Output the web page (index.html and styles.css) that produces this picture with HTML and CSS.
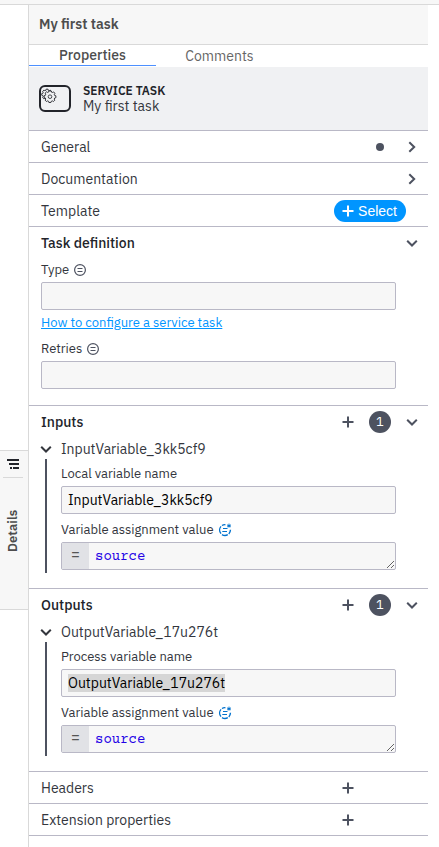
FILE: index.html
```html
<!DOCTYPE html>
<html lang="en">
<head>
<meta charset="utf-8">
<meta name="viewport" content="width=device-width, initial-scale=1">
<title>My first task</title>
<link rel="stylesheet" href="styles.css">
</head>
<body>
<svg class="symbols" aria-hidden="true">
  <symbol id="right" viewBox="0 0 16 16"><path d="M5.3 3.2 10.2 8l-4.9 4.8" fill="none" stroke="currentColor" stroke-width="2"/></symbol>
  <symbol id="down" viewBox="0 0 16 16"><path d="M3.2 5.8 8 10.5l4.8-4.7" fill="none" stroke="currentColor" stroke-width="2"/></symbol>
  <symbol id="plus" viewBox="0 0 16 16"><path d="M8 2.5v11M2.5 8h11" fill="none" stroke="currentColor" stroke-width="2"/></symbol>
  <symbol id="feel" viewBox="0 0 14 14"><g fill="none" stroke="currentColor"><circle cx="7" cy="7" r="5.4" stroke-width="1.2"/><path d="M4.5 5.5h5M4.5 8.5h5"/></g></symbol>
  <symbol id="feel-required" viewBox="0 0 14 14"><g fill="none" stroke="currentColor"><path d="M7.4 1.7A5.4 5.4 0 0 0 4 2.5M3 3.4A5.4 5.4 0 0 0 3 10.6M4 11.6A5.4 5.4 0 0 0 9.8 11.7M10.8 10.9A5.4 5.4 0 0 0 12.4 6.8" stroke-width="1.4"/><path d="M5 5.5h4.5M4.3 8.5h4.7" stroke-width="1.2"/><path d="M11 .6v4M9.1 1.9l3.8 1.4M12.9 1.9l-3.8 1.4M11 2.6l1.2 1.6M11 2.6 9.8 4.2" stroke-width=".9"/></g></symbol>
</svg>
<div class="topbar"></div>
<div class="workspace">
  <aside class="rail">
    <button class="details-tab" type="button">
      <svg class="details-icon" viewBox="0 0 12 10" aria-hidden="true"><path d="M0 1h12M2 5h10M3 9h2M6 9h6" fill="none" stroke="currentColor" stroke-width="2"/></svg>
      <span class="details-text">Details</span>
    </button>
  </aside>
  <main class="panel">
    <h1 class="title">My first task</h1>
    <nav class="tabs">
      <button class="tab tab-active" type="button">Properties</button>
      <button class="tab" type="button">Comments</button>
    </nav>
    <header class="element">
      <svg class="element-icon" viewBox="0 0 32 27" aria-hidden="true">
        <rect x="1" y="1" width="30" height="25" rx="5" fill="none" stroke="currentColor" stroke-width="2"/>
        <path id="gear-back" d="M7.3 4.2h2l.3 1.2 1.2.5 1.1-.6 1.3 1.4-.6 1 .4 1.2 1.2.3v1.9l-1.2.3-.5 1.1.6 1.1-1.4 1.3-1-.6-1.2.5-.3 1.1h-2l-.3-1.2-1.1-.4-1.1.6-1.3-1.4.6-1-.5-1.2-1.1-.3v-1.9l1.2-.3.4-1.2-.6-1 1.4-1.4 1 .6 1.2-.4z" transform="translate(.6 .4) scale(.9)" fill="none" stroke="currentColor"/>
        <path d="M10 5.8h2l.3 1.2 1.2.5 1.1-.6 1.3 1.4-.6 1 .4 1.2 1.2.3v1.9l-1.2.3-.5 1.1.6 1.1-1.4 1.3-1-.6-1.2.5-.3 1.1h-2l-.3-1.2-1.1-.4-1.1.6-1.3-1.4.6-1-.5-1.2-1.1-.3v-1.9l1.2-.3.4-1.2-.6-1 1.4-1.4 1 .6 1.2-.4z" fill="#f0f1f3" stroke="currentColor" stroke-width=".9"/>
        <circle cx="11" cy="11.7" r="1.8" fill="none" stroke="currentColor" stroke-width=".8"/>
      </svg>
      <div>
        <div class="element-type">SERVICE TASK</div>
        <div class="element-name">My first task</div>
      </div>
    </header>

    <section class="group">
      <div class="group-head"><h2>General</h2><span class="slot"><i class="dot"></i></span><button class="slot" type="button" aria-label="Open General"><svg><use href="#right"/></svg></button></div>
    </section>
    <section class="group">
      <div class="group-head"><h2>Documentation</h2><button class="slot" type="button" aria-label="Open Documentation"><svg><use href="#right"/></svg></button></div>
    </section>
    <section class="group">
      <div class="group-head template"><h2>Template</h2><button class="select" type="button"><svg><use href="#plus"/></svg>Select</button></div>
    </section>

    <section class="group">
      <div class="group-head open"><h2>Task definition</h2><button class="slot" type="button" aria-label="Close Task definition"><svg><use href="#down"/></svg></button></div>
      <div class="entries">
        <div class="entry">
          <label for="type">Type <svg class="feel"><use href="#feel"/></svg></label>
          <input class="field" id="type" type="text">
          <a class="hint" href="#">How to configure a service task</a>
        </div>
        <div class="entry">
          <label for="retries">Retries <svg class="feel"><use href="#feel"/></svg></label>
          <input class="field" id="retries" type="text">
        </div>
      </div>
    </section>

    <section class="group">
      <div class="group-head open"><h2>Inputs</h2><button class="slot" type="button" aria-label="Add input"><svg><use href="#plus"/></svg></button><span class="slot"><b class="count">1</b></span><button class="slot" type="button" aria-label="Close Inputs"><svg><use href="#down"/></svg></button></div>
      <div class="item">
        <button class="item-head" type="button"><svg><use href="#down"/></svg>InputVariable_3kk5cf9</button>
        <div class="item-body">
          <label for="local">Local variable name</label>
          <input class="field" id="local" type="text" value="InputVariable_3kk5cf9">
          <label class="second" for="in-value">Variable assignment value <svg class="feel required"><use href="#feel-required"/></svg></label>
          <div class="expression"><span class="equals">=</span><textarea id="in-value" rows="1" spellcheck="false">source</textarea></div>
        </div>
      </div>
    </section>

    <section class="group">
      <div class="group-head open"><h2>Outputs</h2><button class="slot" type="button" aria-label="Add output"><svg><use href="#plus"/></svg></button><span class="slot"><b class="count">1</b></span><button class="slot" type="button" aria-label="Close Outputs"><svg><use href="#down"/></svg></button></div>
      <div class="item">
        <button class="item-head" type="button"><svg><use href="#down"/></svg>OutputVariable_17u276t</button>
        <div class="item-body">
          <label for="process">Process variable name</label>
          <input class="field" id="process" type="text" value="OutputVariable_17u276t">
          <label class="second" for="out-value">Variable assignment value <svg class="feel required"><use href="#feel-required"/></svg></label>
          <div class="expression"><span class="equals">=</span><textarea id="out-value" rows="1" spellcheck="false">source</textarea></div>
        </div>
      </div>
    </section>

    <section class="group">
      <div class="group-head addable"><h2>Headers</h2><button class="slot" type="button" aria-label="Add header"><svg><use href="#plus"/></svg></button></div>
    </section>
    <section class="group">
      <div class="group-head addable"><h2>Extension properties</h2><button class="slot" type="button" aria-label="Add property"><svg><use href="#plus"/></svg></button></div>
    </section>
  </main>
</div>
<script src="script.js"></script>
</body>
</html>
```
FILE: styles.css
```css
* { box-sizing: border-box; }
body {
  margin: 0;
  min-height: 100vh;
  display: flex;
  flex-direction: column;
  background: #fff;
  color: #22242a;
  font: 14px/20px "IBM Plex Sans", Roboto, "Noto Sans", sans-serif;
}
button { padding: 0; border: 0; background: none; color: inherit; font: inherit; }
h1, h2 { margin: 0; font-size: 14px; }
svg { display: block; width: 16px; height: 16px; flex: none; }
.symbols { position: absolute; width: 0; height: 0; }
.topbar { height: 5px; background: #f7f7f7; border-bottom: 1px solid #d9d9d9; }
.workspace { flex: 1; display: flex; }

.rail { width: 28px; padding-top: 445px; }
.details-tab {
  width: 28px;
  height: 160px;
  padding: 8px 5px 0 3px;
  display: flex;
  flex-direction: column;
  align-items: center;
  background: #f7f7f7;
  border: solid #d9d9d9;
  border-width: 1px 0;
  color: #22242a;
}
.details-icon { width: 12px; height: 10px; }
.details-text {
  width: 20px;
  height: 106px;
  margin-top: 8px;
  border-bottom: 1px solid #d9d9d9;
  writing-mode: vertical-rl;
  transform: rotate(180deg);
  font-size: 13px;
  font-weight: 600;
  color: #4d4d4d;
  text-align: center;
}
.details-text { border-bottom: 1px solid #d9d9d9; }

.panel { flex: 1; min-width: 0; margin-right: 11px; border-left: 1px solid #d9d9d9; }
.title { padding: 9px 10px 10px; background: #f7f7f7; border-bottom: 1px solid #d9d9d9; color: #4d4d4d; font-weight: 600; }
.tabs { display: flex; height: 22px; }
.tab { width: 127px; height: 21px; color: #666; }
.tab-active { color: #4d4d4d; font-weight: 500; border-bottom: 1px solid #4d90ff; }
.element { display: flex; align-items: center; gap: 12px; height: 64px; padding: 0 10px; background: #f0f1f3; border-bottom: 1px solid #b9b8c6; }
.element-icon { width: 32px; height: 27px; }
.element-type { font-size: 12px; line-height: 16px; font-weight: 600; }
.element-name { line-height: 15px; color: #33363d; }

.group { border-bottom: 1px solid #b9b8c6; }
.group-head { display: flex; align-items: center; height: 31px; padding-left: 12px; color: #33363d; }
.group-head h2 { flex: 1; font-weight: 400; }
.open { height: 32px; color: #22242a; }
.open h2 { font-weight: 500; }
.slot { width: 32px; height: 32px; display: flex; align-items: center; justify-content: center; color: #4d5260; }
.dot { width: 8px; height: 8px; border-radius: 50%; background: #4d5260; }
.count { width: 22px; border-radius: 11px; font-size: 13px; line-height: 22px; text-align: center; font-weight: 400; background: #4d5260; color: #fff; }
.template { padding-right: 22px; }
.addable { padding-right: 64px; }
.select {
  display: flex;
  align-items: center;
  height: 22px;
  padding: 0 9px 0 6px;
  border-radius: 11px;
  background: #0095ff;
  color: #fff;
  font-family: "Liberation Sans", sans-serif;
}
.select svg { margin-right: 2px; }

.entries { padding: 1px 32px 16px 12px; }
.entry + .entry { margin-top: 6px; }
label { display: flex; align-items: center; gap: 4px; height: 20px; margin-bottom: 2px; font-size: 13px; color: #33363d; }
.feel { width: 14px; height: 14px; color: #4d5260; }
.required { color: #0072ce; }
.field, .expression { width: 100%; height: 28px; border: 1px solid #b9b8c6; border-radius: 2px; background: #f7f7f7; }
.field { display: block; padding: 3px 6px; font: inherit; color: #000; outline: 0; }
.field::selection { background: #d6d6d6; color: #000; }
.hint { display: block; margin-top: 3px; font-size: 13px; color: #0095ff; }

.item { padding: 0 32px 15px 12px; }
.item-head { display: flex; align-items: center; height: 20px; gap: 7px; margin: 1px 0 0 -3px; color: #33363d; }
.item-body { margin-left: 4px; padding: 5px 0 3px 14px; border-left: 2px solid #4d5260; }
.second { margin-top: 6px; }
.expression { display: flex; }
.equals { width: 27px; background: #e1e2e6; color: #555; font: 14px/26px "Liberation Mono", monospace; text-align: center; }
.expression textarea {
  flex: 1;
  min-width: 0;
  height: 26px;
  padding: 4px 6px;
  border: 0;
  outline: 0;
  background: none;
  resize: vertical;
  overflow: hidden;
  font: 14px/20px "Courier Prime", "Nimbus Mono PS", FreeMono, "Courier 10 Pitch", "IBM Plex Mono", "Liberation Mono", monospace;
  color: #2200e6;
}
```
FILE: script.js
```js
// Start with the name of the output ready to be typed over.
document.getElementById('process').select();
```
